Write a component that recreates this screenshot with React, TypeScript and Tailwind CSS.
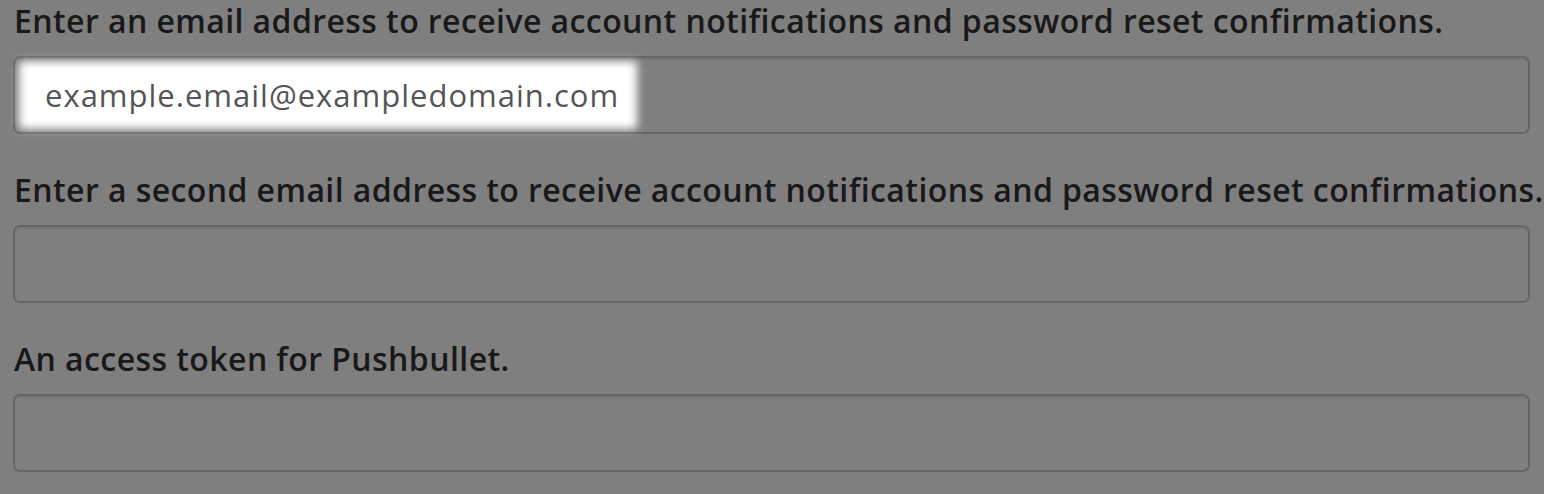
import { useState } from "react";

type Field = {
  id: string;
  label: string;
  value?: string;
  spotlight?: boolean;
};

const FIELDS: Field[] = [
  {
    id: "email",
    label:
      "Enter an email address to receive account notifications and password reset confirmations.",
    value: "example.email@exampledomain.com",
    spotlight: true,
  },
  {
    id: "email2",
    label:
      "Enter a second email address to receive account notifications and password reset confirmations.",
  },
  {
    id: "pushbullet",
    label: "An access token for Pushbullet.",
  },
];

// Dark overlay with a soft-edged hole over the highlighted field
function Spotlight() {
  return (
    <div className="pointer-events-none absolute left-[6px] top-[5px] z-10 h-[68px] w-[618px] rounded-[4px] shadow-[0_0_0_1600px_rgba(0,0,0,0.5)] blur-[4px]" />
  );
}

export default function App() {
  const [values, setValues] = useState<Record<string, string>>(() =>
    Object.fromEntries(FIELDS.map((f) => [f.id, f.value ?? ""]))
  );

  return (
    <div className="min-h-screen overflow-hidden bg-white px-[13px] pt-[5px] font-['Open_Sans',sans-serif] text-[#333]">
      {FIELDS.map((f) => (
        <div key={f.id} className="mb-[40px] flex flex-col">
          <label
            htmlFor={f.id}
            className="block whitespace-nowrap px-[1px] text-[32px] font-semibold leading-[32px] tracking-[0.42px]"
          >
            {f.label}
          </label>
          <div className="relative mt-[19px] w-[1517px]">
            <input
              id={f.id}
              type="text"
              value={values[f.id]}
              onChange={(e) =>
                setValues((v) => ({ ...v, [f.id]: e.target.value }))
              }
              className="block h-[78px] w-full rounded-[7px] border-2 border-[#ccc] bg-white pl-[30px] pr-4 text-[31px] tracking-[1px] text-[#555] shadow-[inset_0_2px_2px_rgba(0,0,0,0.075)] outline-none"
            />
            {f.spotlight && <Spotlight />}
          </div>
        </div>
      ))}
    </div>
  );
}
